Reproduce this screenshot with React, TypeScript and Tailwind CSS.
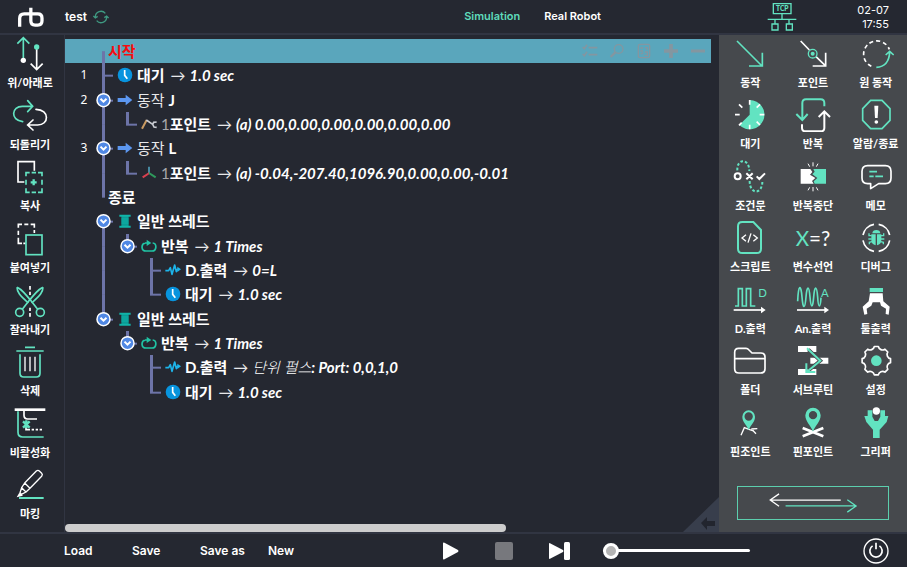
import { useState, type ReactNode } from "react";

const MINT = "#62e3c1";
const LINE = "#6d74a8";

/* ---------- drawing helpers ---------- */

function Glyph({ box, className = "size-9", children }: { box: string; className?: string; children: ReactNode }) {
  return (
    <svg viewBox={box} className={className} fill="none" stroke="#fff" strokeWidth={5} aria-hidden="true">
      {children}
    </svg>
  );
}

function gearPath(cx: number, cy: number) {
  const at = (deg: number, r: number) => {
    const a = (deg * Math.PI) / 180;
    return `${(cx + r * Math.cos(a)).toFixed(1)} ${(cy + r * Math.sin(a)).toFixed(1)}`;
  };
  let d = `M${at(-8, 43)}`;
  for (let k = 0; k < 8; k++) {
    d += `L${at(k * 45 + 8, 43)}A13 13 0 0 0 ${at(k * 45 + 37, 43)}`;
  }
  return d + "Z";
}

/* ---------- edit tools ---------- */

const editTools: { name: string; icon: ReactNode }[] = [
  {
    name: "위/아래로",
    icon: (
      <Glyph box="36 105 108 108">
        <path stroke={MINT} d="M70 175V113M52 131l18-18 18 18" />
        <circle cx="70" cy="181" r="8" fill="#fff" stroke="none" />
        <path d="M110 146v63M92 191l18 18 18-18" />
        <circle cx="110" cy="141" r="8" fill={MINT} stroke="none" />
      </Glyph>
    ),
  },
  {
    name: "되돌리기",
    icon: (
      <Glyph box="36 290 108 108">
        <path stroke={MINT} strokeLinecap="round" d="M68 364C30 360 34 317 68 318h29M83 301l15 17-15 16" />
        <path strokeLinecap="round" d="M108 327c42 1 40 48 4 47H84M99 359l-16 15 16 15" />
      </Glyph>
    ),
  },
  {
    name: "복사",
    icon: (
      <Glyph box="36 25 108 108">
        <path d="M73 97H54V36h49v27" />
        <path
          stroke={MINT}
          d="M78 80V69h11M95 69h13M114 69h12v11M126 90v15M126 116v12h-12M108 128H95M89 128H78v-12M78 105V90"
        />
        <path stroke={MINT} strokeWidth={7} d="M101 89v18M92 98h18" />
      </Glyph>
    ),
  },
  {
    name: "붙여넣기",
    icon: (
      <Glyph box="36 209 108 108">
        <path d="M55 232v-10h11M73 222h12M92 222h11v10M103 239v9M55 241v13M55 262v17h11M70 279h7" />
        <rect x="78" y="254" width="48" height="59" stroke={MINT} />
      </Glyph>
    ),
  },
  {
    name: "잘라내기",
    icon: (
      <Glyph box="36 394 108 108">
        <g stroke={MINT} strokeLinejoin="round">
          <circle cx="59" cy="485" r="12" />
          <circle cx="121" cy="485" r="12" />
          <path d="M51 410c14 4 22 18 42 40l20 26M51 410c0 14 8 24 34 47" />
          <path d="M129 410c-14 4-22 18-42 40l-20 26M129 410c0 14-8 24-34 47" />
        </g>
        <path d="M90 406v11M90 423v10M90 471v10M90 487v11" />
      </Glyph>
    ),
  },
  {
    name: "삭제",
    icon: (
      <Glyph box="36 24 108 108">
        <path stroke={MINT} d="M75 37h30M49 48h82M60 58v57q0 11 11 11h38q11 0 11-11V58" />
        <path strokeWidth={4} d="M75 65v44M90 65v44M105 65v44" />
      </Glyph>
    ),
  },
  {
    name: "비활성화",
    icon: (
      <Glyph box="36 209 108 108">
        <path stroke={MINT} d="M54 228v63q0 14 14 14h63" />
        <path strokeWidth={8} d="M44 223h92" />
        <path d="M72 226v14q0 11 11 11h28" />
        <path d="M78 276v7h12M95 283h7M107 283h7M119 283h7" />
        <path stroke={MINT} strokeWidth={7} d="M69 258l20 19M89 258l-20 19M79 255v24" />
      </Glyph>
    ),
  },
  {
    name: "마킹",
    icon: (
      <Glyph box="36 394 108 108">
        <path
          strokeWidth={4}
          strokeLinejoin="round"
          d="M109 409q5-4 9 0l7 7q4 4 0 9l-35 36-16-16zM74 445l-9 14 13 13 12-11M65 459l-5 15 4 5 14-7"
        />
        <path fill="#fff" stroke="none" d="M50 488l8-14 11 9z" />
        <path stroke={MINT} strokeWidth={6} d="M57 490h74" />
      </Glyph>
    ),
  },
];

/* ---------- command palette ---------- */

const commands: { name: string; icon: ReactNode }[] = [
  {
    name: "동작",
    icon: (
      <Glyph box="52 105 108 108">
        <path stroke={MINT} d="M67 123l75 75M103 198h40v-40" />
      </Glyph>
    ),
  },
  {
    name: "포인트",
    icon: (
      <Glyph box="240 105 108 108">
        <path d="M257 123l26 27M303 170l28 27M293 198h39v-40" />
        <circle cx="293" cy="161" r="13" stroke={MINT} strokeWidth={4} />
        <circle cx="293" cy="161" r="6" fill={MINT} stroke="none" />
      </Glyph>
    ),
  },
  {
    name: "원 동작",
    icon: (
      <Glyph box="428 105 108 108">
        <path strokeDasharray="12 9" d="M468 199A40 40 0 1 1 522 148" />
        <path stroke={MINT} d="M483 202q38-2 40-46M511 165l12-11 12 11" />
      </Glyph>
    ),
  },
  {
    name: "대기",
    icon: (
      <Glyph box="52 290 108 108">
        <path fill={MINT} stroke="none" d="M105 346V302A44 44 0 1 1 74 377Z" />
        <path d="M61 346h14M73 315l10 10M105 302v14M136 315l-10 10M149 346h-14M136 377l-10-10M105 390v-14M73 378l8-8" />
      </Glyph>
    ),
  },
  {
    name: "반복",
    icon: (
      <Glyph box="240 290 108 108">
        <path stroke={MINT} strokeWidth={6} d="M328 321v-10q0-11-11-11h-44q-11 0-11 11v50M244 344l18 18 16-18" />
        <path strokeWidth={6} d="M261 375v10q0 11 11 11h45q11 0 11-11v-48M311 353l17-17 17 17" />
      </Glyph>
    ),
  },
  {
    name: "알람/종료",
    icon: (
      <Glyph box="428 290 108 108">
        <path stroke={MINT} d="M466 303h34l24 25v35l-24 25h-34l-24-25v-35z" />
        <path fill="#fff" stroke="none" d="M477 319h12l-2 37h-8z" />
        <circle cx="483" cy="368" r="5.5" fill="#fff" stroke="none" />
      </Glyph>
    ),
  },
  {
    name: "조건문",
    icon: (
      <Glyph box="52 25 108 108">
        <path stroke={MINT} strokeWidth={6} strokeDasharray="8 6" d="M68 62C66 25 104 25 104 64M105 94C105 136 145 136 143 92" />
        <circle cx="69" cy="80" r="9" strokeWidth={6} />
        <path strokeWidth={6} d="M95 71l19 18M114 71l-19 18M126 80l8 8 17-17" />
      </Glyph>
    ),
  },
  {
    name: "반복중단",
    icon: (
      <Glyph box="240 25 108 108">
        <path fill="#fff" stroke="none" d="M257 58h29l6 9-7 8 16 10-10 9 5 8h-39z" />
        <path fill={MINT} stroke="none" d="M295 58h38v44h-34l-3-7 11-10-15-11 7-8z" />
        <path strokeWidth={3} d="M279 42l5 9M294 38v12M309 42l-5 9M279 122l5-9M294 125v-13M309 122l-5-9" />
      </Glyph>
    ),
  },
  {
    name: "메모",
    icon: (
      <Glyph box="428 25 108 108">
        <path
          strokeLinejoin="round"
          d="M457 48h53q17 0 17 17v20q0 17-17 17h-20l-24 15v-15h-9q-17 0-17-17V65q0-17 17-17z"
        />
        <path stroke={MINT} d="M462 66h23M462 80h13M480 80h23" />
      </Glyph>
    ),
  },
  {
    name: "스크립트",
    icon: (
      <Glyph box="52 209 108 108">
        <path stroke={MINT} strokeWidth={6} d="M83 218h33l23 24v56q0 13-13 13H83q-13 0-13-13v-67q0-13 13-13z" />
        <path strokeWidth={4} d="M94 256l-12 10 12 10M116 256l12 10-12 10M109 252l-9 28" />
      </Glyph>
    ),
  },
  {
    name: "변수선언",
    icon: (
      <Glyph box="240 209 108 108">
        <text
          x="294"
          y="289"
          textAnchor="middle"
          stroke="none"
          fill="#fff"
          fontFamily="Lato, sans-serif"
          fontWeight="400"
          fontSize="62"
        >
          <tspan fill={MINT}>X</tspan>=?
        </text>
      </Glyph>
    ),
  },
  {
    name: "디버그",
    icon: (
      <Glyph box="428 209 108 108">
        <path d="M476 225a41 41 0 0 0-33 32M490 225a41 41 0 0 1 33 32M443 273a41 41 0 0 0 33 33M523 273a41 41 0 0 1-33 33" />
        <g fill={MINT} stroke="none">
          <path d="M471 252q1-10 12-10t12 10z" />
          <path d="M468 255h13v33q-13-3-13-16zM485 255h13v17q0 13-13 16z" />
        </g>
        <path stroke={MINT} strokeWidth={4} d="M461 252v7h8M505 252v7h-8M459 269h10M507 269h-10M462 285v-6l8-2M504 285v-6l-8-2" />
      </Glyph>
    ),
  },
  {
    name: "D.출력",
    icon: (
      <Glyph box="52 19 108 108">
        <path stroke={MINT} d="M61 94h10V42h12v52h12V42h13v52h14" />
        <text x="131" y="67" fill={MINT} stroke="none" fontFamily="Lato, sans-serif" fontWeight="400" fontSize="34">
          D
        </text>
        <path d="M57 106h88" />
        <path fill="#fff" stroke="none" d="M139 96l14 10-14 10z" />
      </Glyph>
    ),
  },
  {
    name: "An.출력",
    icon: (
      <Glyph box="240 19 108 108">
        <path
          stroke={MINT}
          d="M248 80c2-52 10-52 13-13s9 37 12 0 9-35 12 0 8 37 11 0 9-35 12 0c2 36 8 34 10 2"
        />
        <text x="318" y="67" fill={MINT} stroke="none" fontFamily="Lato, sans-serif" fontWeight="400" fontSize="34">
          A
        </text>
        <path d="M246 106h88" />
        <path fill="#fff" stroke="none" d="M328 96l14 10-14 10z" />
      </Glyph>
    ),
  },
  {
    name: "툴출력",
    icon: (
      <Glyph box="428 19 108 108">
        <path fill={MINT} stroke="none" d="M463 40h40v12h-40z" />
        <path
          fill="#fff"
          stroke="none"
          d="M464 56h38l2 24 19 16-3 24-9-2 1-16-15-9-3-10h-22l-4 10-14 9 2 16-9 2-5-24 18-16z"
        />
      </Glyph>
    ),
  },
  {
    name: "폴더",
    icon: (
      <Glyph box="52 204 108 108">
        <path
          strokeLinejoin="round"
          d="M60 235q0-12 12-12h22q5 0 9 5l9 9h27q12 0 12 12v35q0 13-13 13H73q-13 0-13-13zM60 254h91"
        />
      </Glyph>
    ),
  },
  {
    name: "서브루틴",
    icon: (
      <Glyph box="240 204 108 108">
        <path fill="#fff" stroke="none" d="M249 216h55v18h-55zM286 251h54v18h-54zM249 285h55v18h-55z" />
        <path stroke="#46494d" strokeWidth={11} d="M280 227l36 33-36 30" />
        <path stroke={MINT} strokeWidth={6} d="M276 223l40 37-40 33M274 268v26h27" />
      </Glyph>
    ),
  },
  {
    name: "설정",
    icon: (
      <Glyph box="428 204 108 108">
        <path strokeLinejoin="round" d={gearPath(483, 260)} />
        <circle cx="483" cy="260" r="16" fill={MINT} stroke="none" />
      </Glyph>
    ),
  },
  {
    name: "핀조인트",
    icon: (
      <Glyph box="52 29 108 108">
        <path strokeWidth={4} d="M79 123l10-23 14 5 13 5M110 104l18-1M114 108l10 10" />
        <path
          fill={MINT}
          stroke="none"
          fillRule="evenodd"
          d="M102 107c-6-16-19-23-19-40a19 19 0 0 1 38 0c0 17-13 24-19 40zM102 54a12 12 0 1 0 0 25 12 12 0 0 0 0-25z"
        />
      </Glyph>
    ),
  },
  {
    name: "핀포인트",
    icon: (
      <Glyph box="240 29 108 108">
        <path strokeWidth={8} d="M263 101l62 25M325 101l-62 25" />
        <path
          fill={MINT}
          stroke="none"
          fillRule="evenodd"
          d="M294 112c-7-19-23-30-23-49a23 23 0 0 1 46 0c0 19-16 30-23 49zM294 50a12 12 0 1 0 0 25 12 12 0 0 0 0-25z"
        />
      </Glyph>
    ),
  },
  {
    name: "그리퍼",
    icon: (
      <Glyph box="428 29 108 108">
        <path
          fill={MINT}
          stroke="none"
          d="M457 48h14v19l7 13h10l7-13V48h14v17h10l-5 18-21 23v25h-20v-25l-20-23-6-18h10z"
        />
        <circle cx="483" cy="50" r="11" fill="#fff" stroke="none" />
      </Glyph>
    ),
  },
];

/* ---------- program tree ---------- */

const rowIcons = {
  clock: (
    <Glyph box="0 0 48 48" className="size-4 shrink-0">
      <circle cx="24" cy="24" r="22" fill="#0894de" stroke="none" />
      <path d="M23 9v16l8 10" />
    </Glyph>
  ),
  arrow: (
    <Glyph box="0 0 48 48" className="size-4 shrink-0">
      <path fill="#5c97f0" stroke="none" d="M2 18h24V8l20 16-20 16V30H2z" />
    </Glyph>
  ),
  joint: (
    <Glyph box="0 0 48 48" className="size-4 shrink-0">
      <path stroke="#c99a62" strokeWidth={6} d="M3 38L17 12" />
      <path stroke="#c9ccd2" d="M16 12l19 13M47 18l-9 1-3 6 4 8 8 1" />
    </Glyph>
  ),
  axis: (
    <Glyph box="0 0 48 48" className="size-4 shrink-0">
      <path stroke="#4d9db8" d="M24 24V5" />
      <path stroke="#d9404f" strokeWidth={6} d="M25 24L5 37" />
      <path stroke="#2f9a5c" strokeWidth={6} d="M24 24l20 13" />
    </Glyph>
  ),
  spool: (
    <Glyph box="0 0 48 48" className="size-4 shrink-0">
      <path fill="#0b9c96" stroke="none" d="M13 9h22v30H13z" />
      <path stroke="#12b3a8" strokeWidth={6} d="M7 8h34M7 41h34" />
      <path stroke="#12c0b4" strokeWidth={2} d="M13 18h22M13 24h22M13 30h22" />
    </Glyph>
  ),
  loop: (
    <Glyph box="0 0 48 48" className="size-4 shrink-0">
      <path stroke="#20c3a4" d="M13 15C-1 18 0 39 15 39h18c15 0 15-23 2-24M12 15h14" />
      <path fill="#20c3a4" stroke="none" d="M17 5l14 10-14 9z" />
    </Glyph>
  ),
  pulse: (
    <Glyph box="0 0 48 48" className="size-4 shrink-0">
      <path stroke="#1db4ea" strokeLinejoin="round" d="M1 26h10l5-9 5 20 8-28 5 20 3-7h5" />
      <path fill="#1db4ea" stroke="none" d="M37 14l11 8-11 8z" />
    </Glyph>
  ),
};

type Gutter = "blank" | "pass" | "tee" | "elbow" | "start" | "end" | "first" | "middle" | "last" | "single";

function Rail({ kind, narrow }: { kind: Gutter; narrow?: boolean }) {
  const up = ["pass", "tee", "elbow", "end", "middle", "last", "single"].includes(kind);
  const down = ["pass", "tee", "start", "first", "middle"].includes(kind);
  const toggle = ["first", "middle", "last", "single"].includes(kind);
  const stub = toggle || kind === "tee" || kind === "elbow";
  const lines = (
    <svg className="h-full w-6 overflow-visible" aria-hidden="true">
      {up && <rect x="11" y="0" width="3" height="52%" fill={LINE} />}
      {down && <rect x="11" y="50%" width="3" height="55%" fill={LINE} />}
      {stub && <rect x="11" y="48%" width="11" height="2" fill={LINE} />}
      {toggle && (
        <svg x="5" y="50%" width="16" height="16" overflow="visible">
          <circle cx="7.5" cy="0" r="6.5" fill="#5088e4" stroke="#fff" strokeWidth="1.5" />
          <path d="M4.5 -1.5l3 3 3-3" fill="none" stroke="#fff" strokeWidth="2" />
        </svg>
      )}
    </svg>
  );
  if (toggle) {
    return (
      <button type="button" aria-label="접기" className="h-full w-6 shrink-0">
        {lines}
      </button>
    );
  }
  return <span className={narrow ? "h-full w-[17px] shrink-0" : "h-full w-6 shrink-0"}>{lines}</span>;
}

type Row = {
  no?: number;
  rails: Gutter[];
  icon?: keyof typeof rowIcons;
  index?: number;
  label: string;
  light?: boolean;
  suffix?: string;
  koreanValue?: string;
  value?: string;
};

const rows: Row[] = [
  { rails: ["start"], label: "시작" },
  { no: 1, rails: ["tee"], icon: "clock", label: "대기", value: "1.0 sec" },
  { no: 2, rails: ["middle"], icon: "arrow", label: "동작", light: true, suffix: "J" },
  { rails: ["pass", "elbow"], icon: "joint", index: 1, label: "포인트", value: "(a) 0.00,0.00,0.00,0.00,0.00,0.00" },
  { no: 3, rails: ["middle"], icon: "arrow", label: "동작", light: true, suffix: "L" },
  { rails: ["pass", "elbow"], icon: "axis", index: 1, label: "포인트", value: "(a) -0.04,-207.40,1096.90,0.00,0.00,-0.01" },
  { rails: ["end"], label: "종료" },
  { rails: ["first"], icon: "spool", label: "일반 쓰레드" },
  { rails: ["pass", "single"], icon: "loop", label: "반복", value: "1 Times" },
  { rails: ["pass", "blank", "tee"], icon: "pulse", label: "D.출력", value: "0=L" },
  { rails: ["pass", "blank", "elbow"], icon: "clock", label: "대기", value: "1.0 sec" },
  { rails: ["last"], icon: "spool", label: "일반 쓰레드" },
  { rails: ["blank", "single"], icon: "loop", label: "반복", value: "1 Times" },
  { rails: ["blank", "blank", "tee"], icon: "pulse", label: "D.출력", koreanValue: "단위 펄스", value: ": Port: 0,0,1,0" },
  { rails: ["blank", "blank", "elbow"], icon: "clock", label: "대기", value: "1.0 sec" },
];

const rowTools: { name: string; icon: ReactNode }[] = [
  {
    name: "목록",
    icon: <path strokeWidth={5} d="M2 12l5 5 8-12M2 33l5 5 8-12M20 14h26M20 35h26" />,
  },
  {
    name: "검색",
    icon: (
      <>
        <circle cx="29" cy="18" r="13" strokeWidth={4} />
        <path strokeWidth={7} d="M19 28L5 42" />
      </>
    ),
  },
  {
    name: "문서",
    icon: <path strokeWidth={4} d="M12 4h24q5 0 5 5v30q0 5-5 5H12q-5 0-5-5V9q0-5 5-5zM13 15h8M27 14h7v7M13 24h8M14 33l8-4M27 27h7v10h-9" />,
  },
  { name: "추가", icon: <path strokeWidth={11} d="M24 3v42M3 24h42" /> },
  { name: "제거", icon: <path strokeWidth={9} d="M3 24h42" /> },
];

function TreeRow({ row }: { row: Row }) {
  const root = !row.icon;
  const selected = row.label === "시작";
  return (
    <li className={selected ? "flex items-center bg-[#5aa6bc]" : "flex items-center"}>
      <span className="w-[26px] shrink-0 pl-3 text-center font-['Noto_Sans'] text-xs">{row.no}</span>
      {row.rails.map((kind, i) => (
        <Rail key={i} kind={kind} narrow={root} />
      ))}
      {row.icon && <span className="mr-1 pl-0.5">{rowIcons[row.icon]}</span>}
      <span className="flex items-center whitespace-nowrap text-[15px] leading-6">
        {row.index && <span className="text-[#a8a8ac]">{row.index}</span>}
        <span className={selected ? "font-bold text-[#f80c10]" : row.light ? "text-[#e8e8ea]" : "font-bold"}>
          {row.label}
        </span>
        {row.suffix && <span className="ml-1 font-bold">{row.suffix}</span>}
        {row.value && (
          <>
            <span className="mr-1 ml-1.5 text-[#e8e8ea]">→</span>
            {row.koreanValue && <span className="font-light italic">{row.koreanValue}</span>}
            <span className="font-bold whitespace-pre italic">{row.value}</span>
          </>
        )}
      </span>
      {selected && (
        <span className="ml-auto flex gap-[11px] pr-[5px] text-[#8496a0]">
          {rowTools.map((t) => (
            <button key={t.name} type="button" aria-label={t.name}>
              <svg viewBox="0 0 48 48" className="size-4" fill="none" stroke="currentColor" aria-hidden="true">
                {t.icon}
              </svg>
            </button>
          ))}
        </span>
      )}
    </li>
  );
}

function ToolButton({ name, icon }: { name: string; icon: ReactNode }) {
  return (
    <button type="button" className="flex flex-col items-center gap-1 text-[11px] leading-4 font-bold whitespace-nowrap">
      {icon}
      {name}
    </button>
  );
}

export default function App() {
  const [speed, setSpeed] = useState(0);
  return (
    <div className="grid h-screen min-h-[567px] grid-cols-[65px_minmax(0,1fr)_188px] grid-rows-[35px_minmax(0,1fr)_35px] bg-[#252831] font-['Lato','Noto_Sans_CJK_KR',sans-serif] text-white">
      <header className="col-span-3 grid grid-cols-subgrid items-center border-b-2 border-[#313542] font-['Inter',sans-serif]">
        <div className="flex justify-center pr-1">
          <Glyph box="50 15 82 67" className="h-[22px] w-[27px]">
            <path strokeWidth={10} d="M58 78V53q0-14 14-14h41q13 0 13 13v8q0 13-13 13h-8q-13 0-13-13V20" />
          </Glyph>
        </div>
        <div className="flex items-center pr-[118px] text-xs font-semibold">
          <span>test</span>
          <button type="button" aria-label="새로고침" className="ml-1.5">
            <Glyph box="283 24 48 48" className="size-4">
              <path
                stroke="#3f9a82"
                strokeWidth={4}
                d="M290 48a17 17 0 0 1 30-11M324 48a17 17 0 0 1-30 11M284 45l6 6 7-5M330 51l-6-6-7 5"
              />
            </Glyph>
          </button>
          <nav className="ml-auto flex gap-6 text-[11px]">
            <button type="button" className="text-[#5fdcbb]">
              Simulation
            </button>
            <button type="button">Real Robot</button>
          </nav>
        </div>
        <div className="flex items-center justify-between pr-[18px] pl-12">
          <Glyph box="154 4 90 90" className="size-[30px]">
            <g stroke={MINT} strokeWidth={4}>
              <path d="M173 9h53v30h-53zM199 39v17M156 56h86M178 56v13M220 56v13M169 70h18v18h-18zM212 70h18v18h-18z" />
            </g>
            <text x="200" y="31" textAnchor="middle" fill={MINT} stroke="none" fontFamily="Lato, sans-serif" fontWeight="900" fontSize="20">
              TCP
            </text>
          </Glyph>
          <div className="text-right text-[11px] leading-[14px]">
            <div>02-07</div>
            <div>17:55</div>
          </div>
        </div>
      </header>

      <aside className="grid auto-rows-fr border-r border-[#313542] pr-1 pb-1">
        {editTools.map((t) => (
          <ToolButton key={t.name} {...t} />
        ))}
      </aside>

      <main className="relative flex flex-col pt-1">
        <ol className="mr-2 grid h-[365px] auto-rows-fr">
          {rows.map((r, i) => (
            <TreeRow key={i} row={r} />
          ))}
        </ol>
        <div className="mt-auto h-2 w-[441px] rounded-full bg-[#cdcdcd]" />
        <button type="button" aria-label="패널 열기" className="absolute right-0 bottom-0">
          <svg viewBox="0 0 36 35" className="h-[35px] w-9" aria-hidden="true">
            <path d="M0 35L36 0V35Z" fill="#383e4c" />
            <path d="M18 26l6-6v4h8v5h-8v4z" fill="#22252e" />
          </svg>
        </button>
      </main>

      <section className="flex flex-col bg-[#46494d]">
        <div className="grid flex-1 auto-rows-fr grid-cols-3">
          {commands.map((c) => (
            <ToolButton key={c.name} {...c} />
          ))}
        </div>
        <div className="px-[18px] pt-[21px] pb-3">
          <button type="button" aria-label="전환" className="block w-full border border-[#5ccfae]">
            <svg viewBox="67 277 454 98" className="block h-8 w-full" fill="none" strokeWidth={4} aria-hidden="true">
              <path stroke="#fff" d="M379 317H164M190 298l-27 19 27 19" />
              <path stroke={MINT} d="M210 335h215M399 316l27 19-27 19" />
            </svg>
          </button>
        </div>
      </section>

      <footer className="col-span-3 flex items-center border-t-2 border-[#313542] pr-[18px] pl-16">
        <nav className="flex font-['Inter',sans-serif] text-xs font-semibold">
          {["Load", "Save", "Save as", "New"].map((t) => (
            <button key={t} type="button" className="w-[68px] text-left">
              {t}
            </button>
          ))}
        </nav>
        <div className="ml-auto flex items-center">
          <div className="mr-[33px] flex gap-9">
            <button type="button" aria-label="재생">
              <svg viewBox="0 0 16 18" className="h-[18px] w-4" fill="#fff" aria-hidden="true">
                <path d="M0 1.5Q0 0 1.500 .8L15 8q1 1 0 2L1.500 17.200Q0 18 0 16.500Z" />
              </svg>
            </button>
            <button type="button" aria-label="정지">
              <span className="block h-[18px] w-[18px] rounded-xs bg-[#77787d]" />
            </button>
            <button type="button" aria-label="다음">
              <svg viewBox="0 0 21 18" className="h-[18px] w-[21px]" fill="#fff" aria-hidden="true">
                <path d="M0 2Q0 .8 1 1.200L14 8q1 1 0 2L1 16.800Q0 17.200 0 16Z" />
                <rect x="15" y="0" width="6" height="18" rx="1.500" />
              </svg>
            </button>
          </div>
          <input
            type="range"
            aria-label="속도"
            value={speed}
            onChange={(e) => setSpeed(Number(e.target.value))}
            className="mr-[113px] h-[3px] w-[147px] appearance-none rounded-full bg-white [&::-webkit-slider-thumb]:size-4 [&::-webkit-slider-thumb]:appearance-none [&::-webkit-slider-thumb]:rounded-full [&::-webkit-slider-thumb]:border-3 [&::-webkit-slider-thumb]:border-white [&::-webkit-slider-thumb]:bg-[#b4b4b4]"
          />
          <button type="button" aria-label="전원">
            <Glyph box="446 429 76 76" className="size-[26px]">
              <circle cx="484" cy="467" r="35" strokeWidth={4} />
              <path d="M484 443v19M474 452a18 18 0 1 0 20 0" />
            </Glyph>
          </button>
        </div>
      </footer>
    </div>
  );
}
